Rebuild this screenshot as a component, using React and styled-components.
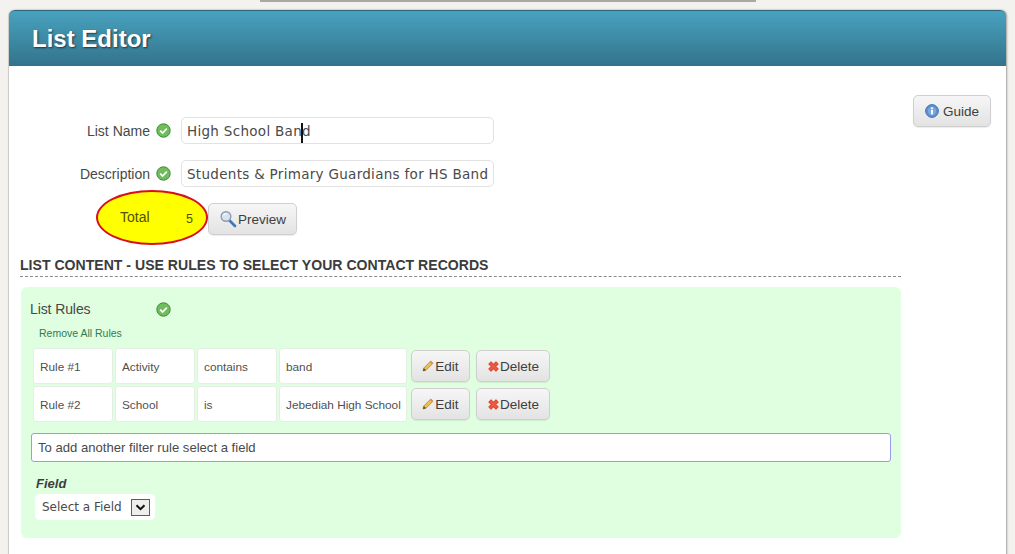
import React from "react";
import styled, { createGlobalStyle } from "styled-components";

const GlobalStyle = createGlobalStyle`
  html, body {
    margin: 0;
    padding: 0;
    height: 554px;
    overflow: hidden;
    background: #f3f2ee;
    font-family: "Liberation Sans", Arial, sans-serif;
  }
  * { box-sizing: border-box; }
`;

const Page = styled.div`
  width: 1015px;
  height: 554px;
  overflow: hidden;
`;

const TopTab = styled.div`
  width: 496px;
  height: 2px;
  margin-left: 260px;
  background: #a9a8a4;
`;

const Panel = styled.div`
  width: 997px;
  height: 560px;
  margin: 8px 0 0 9px;
  background: #fff;
  border-radius: 6px 6px 0 0;
  box-shadow: 1px 0 2px rgba(90, 90, 90, 0.55), -1px 0 1px rgba(90, 90, 90, 0.25);
`;

const Header = styled.div`
  height: 56px;
  padding: 0 23px;
  display: flex;
  align-items: center;
  background: linear-gradient(#48a2bf, #33738b);
  border-top: 1px solid #2d6579;
  border-radius: 6px 6px 0 0;
`;

const HeaderTitle = styled.h1`
  margin: 0;
  font-size: 24px;
  font-weight: bold;
  color: #fff;
  text-shadow: 1px 1px 2px rgba(0, 0, 0, 0.6);
`;

const Body = styled.div`
  padding: 29px 15px 0 11px;
  display: flex;
  flex-direction: column;
`;

const TopArea = styled.div`
  display: flex;
  justify-content: space-between;
  align-items: flex-start;
`;

const Form = styled.div`
  display: flex;
  flex-direction: column;
  gap: 16px;
  padding-top: 22px;
`;

const FieldRow = styled.div`
  display: flex;
  align-items: center;
  height: 27px;
`;

const FieldLabel = styled.label`
  width: 130px;
  text-align: right;
  font-size: 14px;
  color: #484848;
`;

const CheckSlot = styled.span`
  width: 31px;
  padding-left: 6px;
  display: flex;
  align-items: center;
`;

const TextBox = styled.div`
  position: relative;
  width: 313px;
  height: 27px;
  padding: 1px 4px 0 5px;
  display: flex;
  align-items: center;
  overflow: hidden;
  white-space: nowrap;
  background: #fff;
  border: 1px solid #e2e2e2;
  border-radius: 5px;
  font-family: "DejaVu Sans", Verdana, sans-serif;
  font-size: 13.5px;
  letter-spacing: 0.3px;
  color: #4a4a4a;
`;

const Caret = styled.span`
  position: absolute;
  left: 119px;
  top: 5px;
  width: 2px;
  height: 20px;
  background: #111;
`;

const TotalRow = styled.div`
  display: flex;
  align-items: flex-start;
  margin: -13px 0 0 76px;
`;

const TotalOval = styled.div`
  width: 112px;
  height: 55px;
  padding: 0 9px 0 22px;
  display: flex;
  align-items: center;
  justify-content: space-between;
  background: #ffff00;
  border: 2px solid #d8101c;
  border-radius: 50%;
  color: #4f5200;
`;

const TotalLabel = styled.span`
  font-size: 14px;
  margin-top: -2px;
`;

const TotalCount = styled.span`
  font-size: 12.5px;
  margin: 2px 4px 0 0;
`;

const Button = styled.button`
  height: ${({ $h }) => $h || 32}px;
  width: ${({ $w }) => $w}px;
  padding: 0;
  display: inline-flex;
  align-items: center;
  justify-content: center;
  gap: ${({ $gap }) => $gap ?? 1}px;
  background: linear-gradient(#f6f6f6, #e3e3e3);
  border: 1px solid #cfcfcf;
  border-radius: 5px;
  font-family: "Liberation Sans", Arial, sans-serif;
  font-size: 13.5px;
  color: #3e3e3e;
  box-shadow: 0 1px 1px rgba(0, 0, 0, 0.08);
`;

const PreviewButton = styled(Button)`
  margin-top: 13px;
`;

const SectionTitle = styled.h2`
  margin: 9px 0 0;
  width: 881px;
  height: 23px;
  padding-top: 4px;
  border-bottom: 1px dashed #8a8a8a;
  font-size: 14.08px;
  line-height: 15px;
  font-weight: bold;
  color: #3c3c3c;
`;

const RulesBox = styled.div`
  width: 880px;
  height: 251px;
  margin: 10px 0 0 1px;
  padding: 13px 10px 0 9px;
  background: #e0ffe0;
  border-radius: 6px;
`;

const RulesHeading = styled.div`
  display: flex;
  align-items: center;
  height: 18px;
  font-size: 14px;
  letter-spacing: -0.1px;
  color: #484848;
`;

const RulesLabel = styled.span`
  width: 126px;
`;

const RemoveLink = styled.a`
  display: block;
  margin: 9px 0 0 9px;
  font-size: 10.5px;
  line-height: 13px;
  color: #2f7a55;
`;

const RuleList = styled.div`
  display: flex;
  flex-direction: column;
  gap: 2px;
  margin: 8px 0 0 3px;
`;

const RuleRow = styled.div`
  display: flex;
  align-items: center;
  height: 36px;
`;

const RuleCell = styled.div`
  width: ${({ $w }) => $w || 80}px;
  height: 36px;
  margin-right: 2px;
  padding: 1px 0 0 6px;
  display: flex;
  align-items: center;
  white-space: nowrap;
  background: #fff;
  border: 1px solid #e6efe6;
  border-radius: 3px;
  font-size: 11.8px;
  color: #505050;
`;

const RuleActions = styled.div`
  display: flex;
  gap: 6px;
  margin-left: 2px;
`;

const FilterHint = styled.div`
  width: 860px;
  height: 29px;
  margin: 11px 0 0 1px;
  padding-left: 6px;
  display: flex;
  align-items: center;
  background: #fff;
  border: 1px solid #9a9aee;
  border-radius: 3px;
  font-size: 13.1px;
  color: #4a4a4a;
`;

const FieldHeading = styled.div`
  margin: 14px 0 0 6px;
  font-size: 13px;
  line-height: 15px;
  font-weight: bold;
  font-style: italic;
  color: #3e3e3e;
`;

const FakeSelect = styled.div`
  width: 120px;
  height: 26px;
  margin: 3px 0 0 5px;
  padding: 0 5px 0 7px;
  display: flex;
  align-items: center;
  justify-content: space-between;
  background: #fff;
  border-radius: 5px;
  font-family: "DejaVu Sans", Verdana, sans-serif;
  font-size: 12px;
  color: #4a4a4a;
`;

const SelectArrow = styled.span`
  width: 19px;
  height: 17px;
  display: flex;
  align-items: center;
  justify-content: center;
  background: #eeeeea;
  border: 1px solid #5c5c5c;
`;

const CheckIcon = () => (
  <svg width="15" height="15" viewBox="0 0 15 15">
    <circle cx="7.5" cy="7.5" r="6.7" fill="#6fbd5c" stroke="#3d8f35" />
    <path d="M4.2 7.6l2.4 2.4 4.2-4.4" fill="none" stroke="#fff" strokeWidth="1.7" />
  </svg>
);

const SearchIcon = () => (
  <svg width="18" height="18" viewBox="0 0 18 18">
    <path d="M10.5 10.5l5.5 5.5" stroke="#3f79b5" strokeWidth="2.6" strokeLinecap="round" />
    <circle cx="7" cy="6.5" r="4.8" fill="#d6e4f2" stroke="#8c9bb0" strokeWidth="1.4" />
    <path d="M4.5 5.5a3 3 0 0 1 3-1.6" fill="none" stroke="#fff" strokeWidth="1.2" />
  </svg>
);

const PencilIcon = () => (
  <svg width="12" height="12" viewBox="0 0 12 12">
    <path d="M1 11l.8-3L8.8 1l2.2 2.2L4 10.2z" fill="#efc04a" stroke="#a57a26" strokeWidth="0.7" />
    <path d="M8.8 1L11 3.2 10 4.2 7.8 2z" fill="#e58a6a" />
    <path d="M1 11l.8-3 2.2 2.2z" fill="#5b4a35" />
  </svg>
);

const CrossIcon = () => (
  <svg width="13" height="13" viewBox="0 0 11 11">
    <path d="M1.6 3.4l1.8-1.8 2.1 2.1 2.1-2.1 1.8 1.8-2.1 2.1 2.1 2.1-1.8 1.8-2.1-2.1-2.1 2.1-1.8-1.8 2.1-2.1z" fill="#ee5a43" stroke="#df4a35" strokeWidth="0.9" strokeLinejoin="round" />
  </svg>
);

const InfoIcon = () => (
  <svg width="14" height="14" viewBox="0 0 14 14">
    <circle cx="7" cy="7" r="6.4" fill="#5b8fd0" stroke="#4a76b0" />
    <circle cx="7" cy="7" r="4.2" fill="#7ba8df" />
    <rect x="6" y="6" width="2" height="4.4" fill="#fff" />
    <rect x="6" y="3.4" width="2" height="1.7" fill="#fff" />
  </svg>
);

const ArrowIcon = () => (
  <svg width="11" height="7" viewBox="0 0 11 7">
    <path d="M1.5 1.2l4 4 4-4" fill="none" stroke="#111" strokeWidth="2" />
  </svg>
);

const rules = [
  { name: "Rule #1", field: "Activity", op: "contains", value: "band" },
  { name: "Rule #2", field: "School", op: "is", value: "Jebediah High School" },
];

export default function App() {
  return (
    <Page>
      <GlobalStyle />
      <TopTab />
      <Panel>
        <Header>
          <HeaderTitle>List Editor</HeaderTitle>
        </Header>
        <Body>
          <TopArea>
            <Form>
              <FieldRow>
                <FieldLabel>List Name</FieldLabel>
                <CheckSlot><CheckIcon /></CheckSlot>
                <TextBox>
                  High School Band
                  <Caret />
                </TextBox>
              </FieldRow>
              <FieldRow>
                <FieldLabel>Description</FieldLabel>
                <CheckSlot><CheckIcon /></CheckSlot>
                <TextBox>Students &amp; Primary Guardians for HS Band</TextBox>
              </FieldRow>
              <TotalRow>
                <TotalOval>
                  <TotalLabel>Total</TotalLabel>
                  <TotalCount>5</TotalCount>
                </TotalOval>
                <PreviewButton $w={89}>
                  <SearchIcon />
                  Preview
                </PreviewButton>
              </TotalRow>
            </Form>
            <Button $w={78} $gap={4}>
              <InfoIcon />
              Guide
            </Button>
          </TopArea>
          <SectionTitle>LIST CONTENT - USE RULES TO SELECT YOUR CONTACT RECORDS</SectionTitle>
          <RulesBox>
            <RulesHeading>
              <RulesLabel>List Rules</RulesLabel>
              <CheckIcon />
            </RulesHeading>
            <RemoveLink>Remove All Rules</RemoveLink>
            <RuleList>
              {rules.map((rule) => (
                <RuleRow key={rule.name}>
                  <RuleCell>{rule.name}</RuleCell>
                  <RuleCell>{rule.field}</RuleCell>
                  <RuleCell>{rule.op}</RuleCell>
                  <RuleCell $w={128}>{rule.value}</RuleCell>
                  <RuleActions>
                    <Button $w={59}>
                      <PencilIcon />
                      Edit
                    </Button>
                    <Button $w={74} $gap={0}>
                      <CrossIcon />
                      Delete
                    </Button>
                  </RuleActions>
                </RuleRow>
              ))}
            </RuleList>
            <FilterHint>To add another filter rule select a field</FilterHint>
            <FieldHeading>Field</FieldHeading>
            <FakeSelect>
              Select a Field
              <SelectArrow><ArrowIcon /></SelectArrow>
            </FakeSelect>
          </RulesBox>
        </Body>
      </Panel>
    </Page>
  );
}
